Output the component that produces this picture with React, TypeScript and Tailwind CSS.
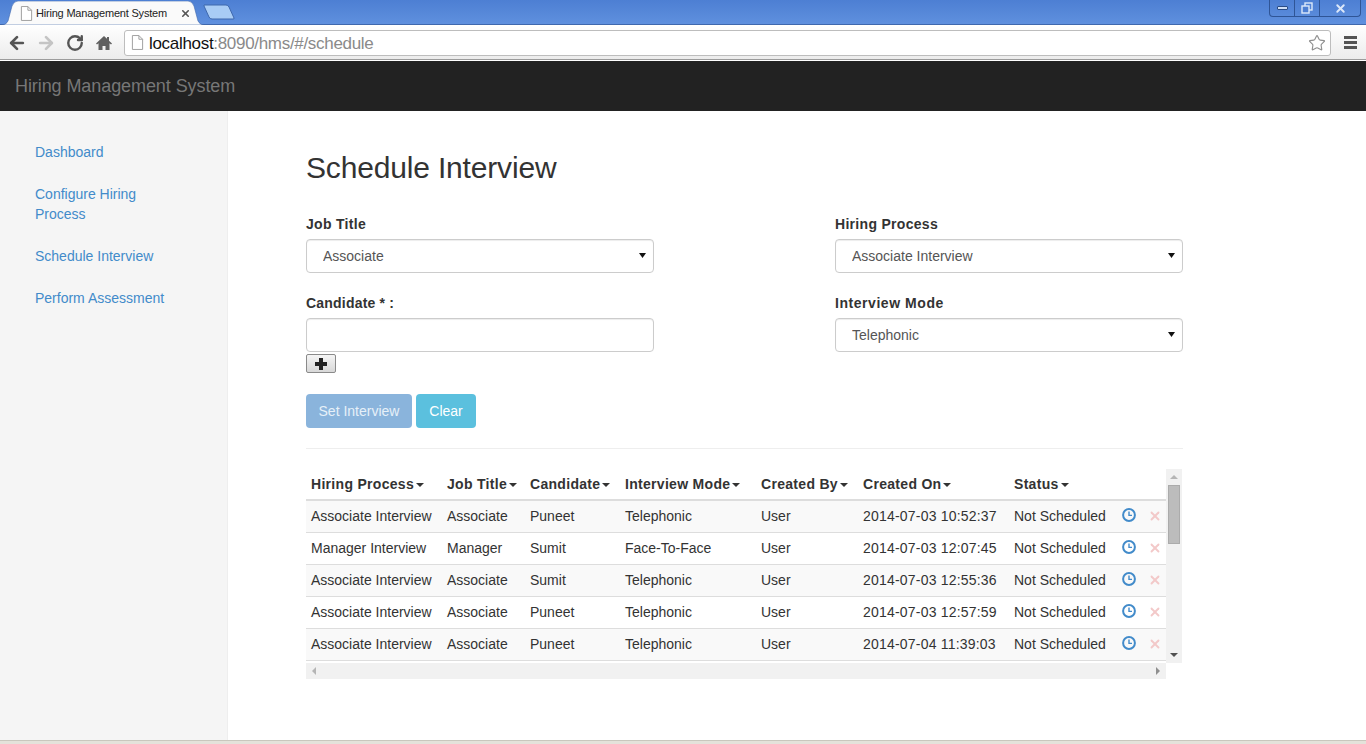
import React from "react";
import { ArrowLeft, ArrowRight, RotateCw, Star, X } from "lucide-react";

const rows = [
  ["Associate Interview", "Associate", "Puneet", "Telephonic", "User", "2014-07-03 10:52:37", "Not Scheduled"],
  ["Manager Interview", "Manager", "Sumit", "Face-To-Face", "User", "2014-07-03 12:07:45", "Not Scheduled"],
  ["Associate Interview", "Associate", "Sumit", "Telephonic", "User", "2014-07-03 12:55:36", "Not Scheduled"],
  ["Associate Interview", "Associate", "Puneet", "Telephonic", "User", "2014-07-03 12:57:59", "Not Scheduled"],
  ["Associate Interview", "Associate", "Puneet", "Telephonic", "User", "2014-07-04 11:39:03", "Not Scheduled"],
];

const headers = [
  { label: "Hiring Process", width: "w-[136px]" },
  { label: "Job Title", width: "w-[83px]" },
  { label: "Candidate", width: "w-[95px]" },
  { label: "Interview Mode", width: "w-[136px]" },
  { label: "Created By", width: "w-[102px]" },
  { label: "Created On", width: "w-[151px]" },
  { label: "Status", width: "w-[108px]" },
];

const FileIcon = ({ className }: { className: string }) => (
  <svg viewBox="0 0 14 16" className={className} fill="none">
    <path d="M1.5 .5h7l4 4v11h-11z" fill="#fff" stroke="#9a9a9a" />
    <path d="M8.5 .5v4h4" stroke="#9a9a9a" />
  </svg>
);

const ClockIcon = () => (
  <svg viewBox="0 0 14 14" className="w-[14px] h-[14px] block -mt-[2px]" fill="none">
    <circle cx="7" cy="7" r="5.9" stroke="#428bca" strokeWidth="2" />
    <path d="M7 3.4V7.4H10" stroke="#428bca" strokeWidth="1.4" />
  </svg>
);

const Caret = ({ color = "#333" }: { color?: string }) => (
  <svg viewBox="0 0 8 4" className="w-2 h-1 inline-block ml-[2px] align-middle">
    <path d="M0 0h8L4 4z" fill={color} />
  </svg>
);

const SelectField = ({ label, value, spacing = "tracking-[0.3px]" }: { label: string; value: string; spacing?: string }) => (
  <div>
    <label className={`block text-sm font-bold text-[#333] leading-5 mb-[5px] ${spacing}`}>{label}</label>
    <div className="relative">
      <select
        defaultValue={value}
        className="block w-full h-[34px] pl-4 pr-6 bg-white border border-[#ccc] rounded text-sm text-[#555] appearance-none shadow-[inset_0_1px_1px_rgba(0,0,0,0.075)]"
      >
        <option>{value}</option>
      </select>
      <svg viewBox="0 0 7 5" className="absolute right-[8px] top-[14px] w-[7px] h-[5px]">
        <path d="M0 0h7L3.5 5z" fill="#111" />
      </svg>
    </div>
  </div>
);

function BrowserChrome() {
  return (
    <div className="h-[61px] shrink-0">
      {/* title bar */}
      <div className="h-[25px] flex justify-between bg-gradient-to-b from-[#4d7fd3] to-[#5f90de] border-b border-[#3f68ad]">
        <div className="flex items-end pl-[2px]">
          <div className="relative w-[202px] h-[24px] flex items-center pl-[18px] pr-[13px] translate-y-px">
            <svg viewBox="0 0 202 24" className="absolute inset-0 w-[202px] h-[24px]">
              <path d="M0 24q4 0 6-4l4-15q2-5 6-5h170q4 0 6 5l4 15q2 4 6 4z" fill="#fafafa" stroke="#3f68ad" strokeWidth=".6" />
            </svg>
            <FileIcon className="relative w-[13px] h-[15px]" />
            <span className="relative ml-[3px] text-[11px] tracking-[-0.2px] text-[#222] flex-1 truncate">
              Hiring Management System
            </span>
            <X className="relative w-[11px] h-[11px] text-[#555]" strokeWidth={3.5} />
          </div>
          <svg viewBox="0 0 32 16" className="w-[32px] h-[16px] -ml-[1px] mb-[4px]">
            <path d="M1 1h22q2 0 3 2l5 11q.5 1-1 1H9q-2 0-3-2L1 2z" fill="#a9ccf5" stroke="#3f68ad" />
          </svg>
        </div>
        <div className="flex h-[17px] mr-[5px] border border-t-0 border-[#2f5596] rounded-b-[4px] text-white">
          <div className="w-[25px] flex items-center justify-center border-r border-[#2f5596]">
            <div className="w-[11px] h-[4px] bg-[#cfdff6] border border-[#2b4c85] rounded-[1px]" />
          </div>
          <div className="w-[25px] flex items-center justify-center border-r border-[#2f5596]">
            <svg viewBox="0 0 12 12" className="w-3 h-3" fill="none" stroke="#dce8f9" strokeWidth="1.4">
              <rect x="4" y="1" width="7" height="7" />
              <rect x="1" y="4" width="7" height="7" fill="#4d7fd3" />
            </svg>
          </div>
          <div className="w-[40px] flex items-center justify-center">
            <X className="w-[13px] h-[13px] text-[#dce8f9]" strokeWidth={3.5} />
          </div>
        </div>
      </div>
      {/* toolbar */}
      <div className="h-[35px] bg-gradient-to-b from-white to-[#ececec] border-b border-[#9c9c9c] flex items-center pl-[7px] pr-[9px] pt-[1px]">
        <ArrowLeft className="w-5 h-5 text-[#555]" strokeWidth={3.2} />
        <ArrowRight className="w-5 h-5 ml-[9px] text-[#c4c4c4]" strokeWidth={3.2} />
        <RotateCw className="w-[18px] h-[18px] ml-[10px] text-[#555]" strokeWidth={3.2} />
        <svg viewBox="0 0 16 16" className="w-4 h-4 ml-[12px]">
          <path d="M8 1 0 8.6l1 1L2.5 8.3V15h4v-4h3v4h4V8.3L15 9.6l1-1-3-2.9V2h-2v1.8z" fill="#606060" />
        </svg>
        <div className="ml-[12px] flex-1 h-[26px] bg-white border border-[#bdbdbd] rounded-[3px] flex items-center pl-[6px] pr-[4px]">
          <FileIcon className="w-[13px] h-[15px]" />
          <span className="ml-[5px] pt-[2px] text-[17px] text-[#111] tracking-[-0.31px]">
            localhost<span className="text-[#8a8a8a]">:8090/hms/#/schedule</span>
          </span>
          <Star className="w-[18px] h-[18px] ml-auto text-[#8f8f8f]" strokeWidth={1.5} />
        </div>
        <div className="ml-[13px] w-[13px] flex flex-col gap-[2px]">
          <div className="h-[3px] bg-[#555]" />
          <div className="h-[3px] bg-[#555]" />
          <div className="h-[3px] bg-[#555]" />
        </div>
      </div>
    </div>
  );
}

function ScheduleTable() {
  return (
    <div className="flex flex-col">
      <div className="flex h-[194px]">
        <div className="w-[860px] overflow-hidden">
          <table className="w-[860px] table-fixed border-collapse text-sm text-[#333]">
            <thead>
              <tr className="h-[31px] border-b-2 border-[#ddd]">
                {headers.map((h) => (
                  <th key={h.label} className={`${h.width} pl-[5px] text-left font-bold tracking-[0.3px] whitespace-nowrap`}>
                    {h.label}
                    <Caret />
                  </th>
                ))}
                <th className="w-[27px]" />
                <th className="w-[22px]" />
              </tr>
            </thead>
            <tbody>
              {rows.map((r, i) => (
                <tr key={i} className={`h-[32px] border-b border-[#ddd] ${i % 2 === 0 ? "bg-[#f9f9f9]" : "bg-white"}`}>
                  {r.map((c, j) => (
                    <td key={j} className={`pl-[5px] whitespace-nowrap ${j === 5 ? "tracking-[0.2px]" : ""}`}>
                      {c}
                    </td>
                  ))}
                  <td className="pl-[5px]">
                    <ClockIcon />
                  </td>
                  <td className="pl-[4px]">
                    <X className="w-[14px] h-[14px] text-[#f3c9c9]" strokeWidth={3.2} />
                  </td>
                </tr>
              ))}
            </tbody>
          </table>
        </div>
        {/* vertical scrollbar */}
        <div className="w-4 bg-[#f1f1f1] flex flex-col items-center">
          <svg viewBox="0 0 8 4" className="w-2 h-1 mt-[6px] shrink-0">
            <path d="M4 0l4 4H0z" fill="#b5b5b5" />
          </svg>
          <div className="w-3 h-[59px] mt-[6px] bg-[#bcbcbc] border border-[#ababab]" />
          <svg viewBox="0 0 8 4" className="w-2 h-1 mt-auto mb-[6px] shrink-0">
            <path d="M0 0h8L4 4z" fill="#505050" />
          </svg>
        </div>
      </div>
      {/* horizontal scrollbar */}
      <div className="w-[860px] h-4 bg-[#f1f1f1] flex items-center justify-between px-[6px]">
        <svg viewBox="0 0 4 8" className="w-1 h-2">
          <path d="M4 0v8L0 4z" fill="#b5b5b5" />
        </svg>
        <svg viewBox="0 0 4 8" className="w-1 h-2">
          <path d="M0 0v8l4-4z" fill="#8f8f8f" />
        </svg>
      </div>
    </div>
  );
}

export default function App() {
  return (
    <div className="h-[744px] w-[1366px] overflow-hidden flex flex-col bg-white font-['Liberation_Sans',Arial,sans-serif]">
      <BrowserChrome />
      <div className="h-[50px] shrink-0 bg-[#222] flex items-center pl-[15px]">
        <span className="text-lg text-[#777] tracking-[-0.08px]">Hiring Management System</span>
      </div>
      <div className="flex flex-1">
        <aside className="w-[228px] shrink-0 bg-[#f5f5f5] border-r border-[#eee] pt-[31px] pl-[35px] pr-[60px] text-sm leading-5 text-[#428bca]">
          <div className="flex flex-col gap-[22px]">
            <a>Dashboard</a>
            <a>Configure Hiring Process</a>
            <a>Schedule Interview</a>
            <a>Perform Assessment</a>
          </div>
        </aside>
        <main className="flex-1 pl-[78px] pt-[40px]">
          <div className="w-[877px]">
            <h1 className="text-[30px] leading-[33px] text-[#333] mb-[30px] tracking-[-0.17px]">Schedule Interview</h1>
            <div className="grid grid-cols-[348px_348px] justify-between">
              <SelectField label="Job Title" value="Associate" />
              <SelectField label="Hiring Process" value="Associate Interview" />
              <div className="mt-[20px]">
                <label className="block text-sm font-bold text-[#333] leading-5 mb-[5px] tracking-[0.2px]">Candidate * :</label>
                <input className="block w-full h-[34px] bg-white border border-[#ccc] rounded shadow-[inset_0_1px_1px_rgba(0,0,0,0.075)]" />
                <button className="mt-[2px] w-[30px] h-[19px] flex items-center justify-center bg-gradient-to-b from-[#f5f5f5] to-[#d8d8d8] border border-[#8a8a8a] rounded-[2px]">
                  <svg viewBox="0 0 14 14" className="w-[14px] h-[14px]">
                    <path d="M5 1h4v4h4v4H9v4H5V9H1V5h4z" fill="#222" />
                  </svg>
                </button>
              </div>
              <div className="mt-[20px]">
                <SelectField label="Interview Mode" value="Telephonic" spacing="tracking-[0.55px]" />
              </div>
            </div>
            <div className="flex gap-1 mt-[21px]">
              <button className="w-[106px] h-[34px] rounded bg-[#8ab4dc] text-sm text-[#e6f0f8]">Set Interview</button>
              <button className="w-[60px] h-[34px] rounded bg-[#5bc0de] text-sm text-white">Clear</button>
            </div>
            <hr className="mt-[20px] mb-[20px] border-[#eee]" />
            <ScheduleTable />
          </div>
        </main>
      </div>
      <div className="h-[4px] shrink-0 bg-[#e4e2da] border-t border-[#c9c7bd]" />
    </div>
  );
}
